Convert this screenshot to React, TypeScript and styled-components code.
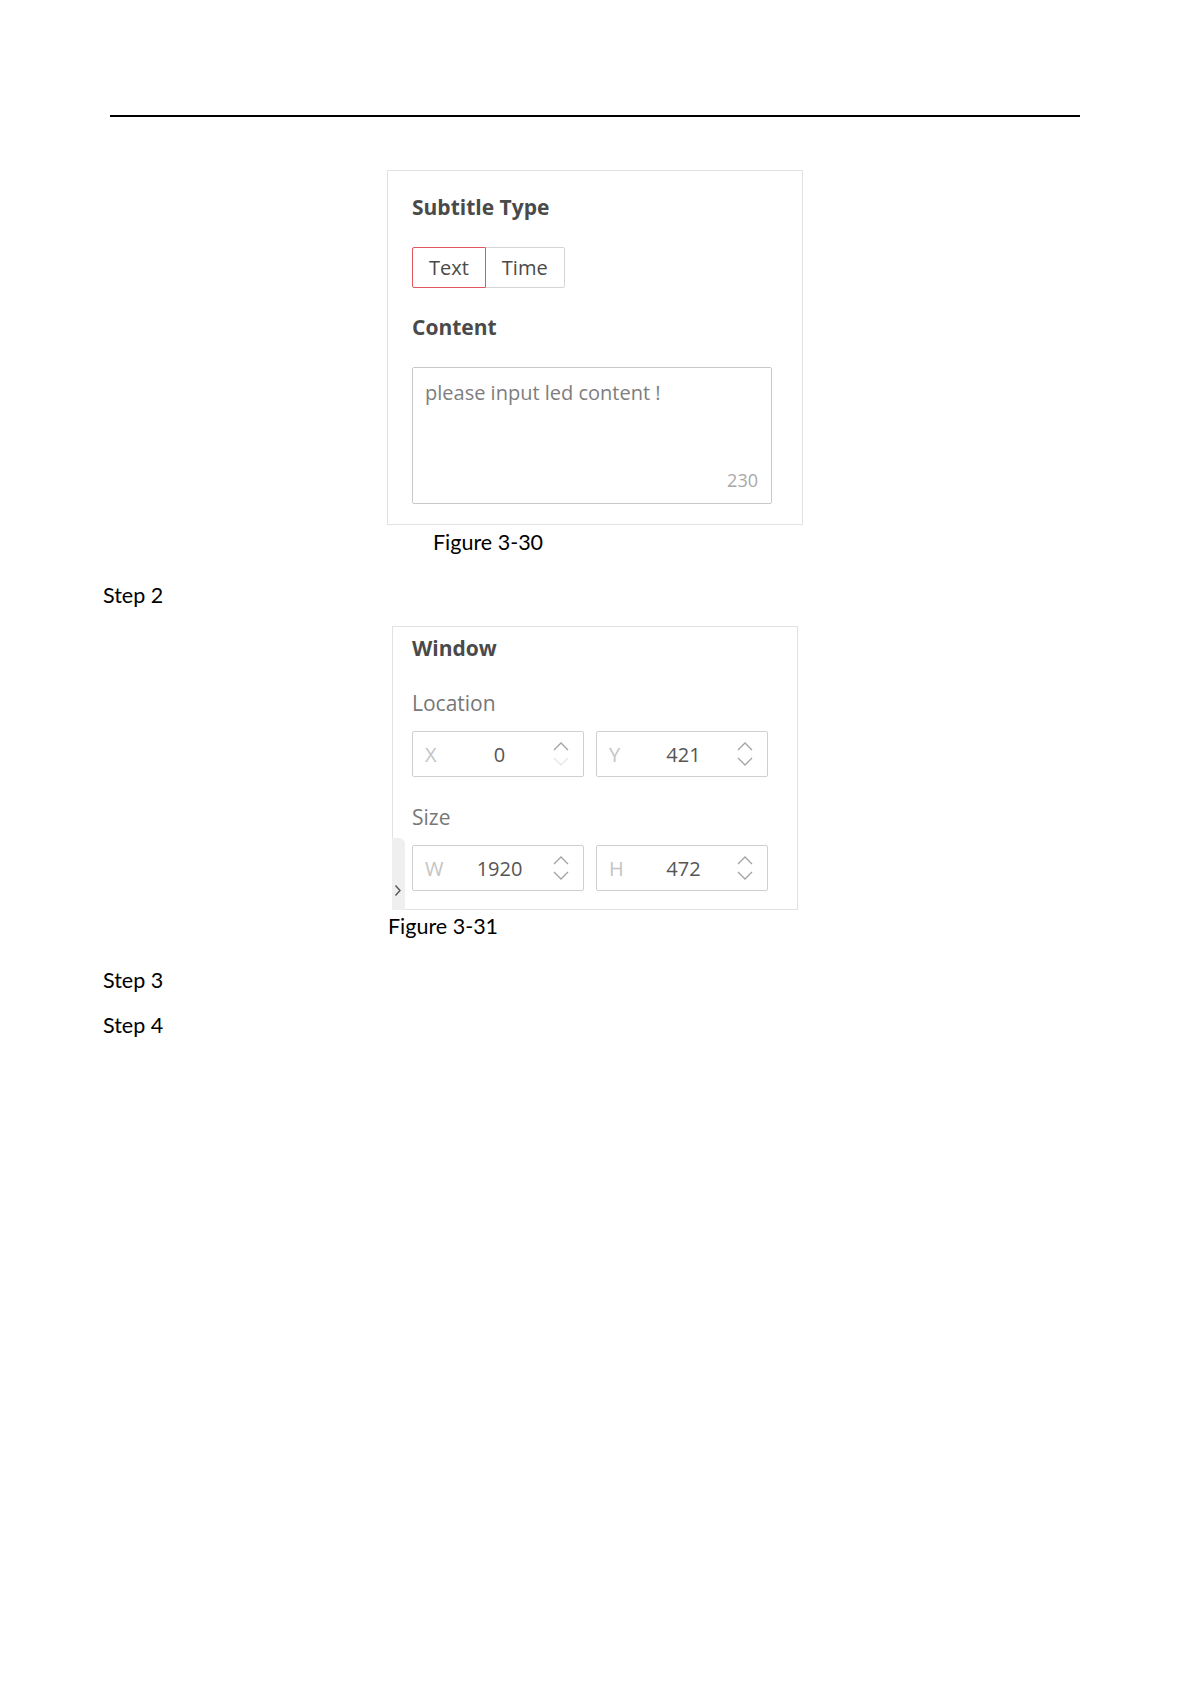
import React from "react";
import styled, { createGlobalStyle } from "styled-components";

const GlobalStyle = createGlobalStyle`
  html, body { margin: 0; padding: 0; background: #ffffff; }
  body { font-family: "Open Sans", "Noto Sans", sans-serif; }
  * { box-sizing: border-box; }
`;

const Page = styled.div`
  width: 1191px;
  min-height: 1684px;
  padding-top: 115px;
  display: flex;
  flex-direction: column;
  align-items: flex-start;
`;

const Rule = styled.div`
  margin-left: 110px;
  width: 970px;
  height: 2px;
  background: #000;
`;

const DocText = styled.div<{ $left: number; $top: number }>`
  margin-left: ${(p) => p.$left}px;
  margin-top: ${(p) => p.$top}px;
  font-family: Lato, "Liberation Sans", sans-serif;
  font-size: 21.5px;
  line-height: 26px;
  color: #000;
`;

const Panel = styled.div<{ $left: number; $top: number; $width: number }>`
  position: relative;
  margin-left: ${(p) => p.$left}px;
  margin-top: ${(p) => p.$top}px;
  width: ${(p) => p.$width}px;
  border: 1px solid #e2e2e2;
  background: #fff;
  display: flex;
  flex-direction: column;
  align-items: flex-start;
`;

const SubtitlePanel = styled(Panel)`
  padding: 22px 30px 20px 24px;
`;

const WindowPanel = styled(Panel)`
  padding: 7px 19px 18px 19px;
`;

const SectionTitle = styled.div<{ $top?: number }>`
  margin-top: ${(p) => p.$top ?? 0}px;
  font-weight: 700;
  font-size: 21px;
  line-height: 28px;
  color: #4a4a4a;
`;

const FieldLabel = styled.div<{ $top?: number }>`
  margin-top: ${(p) => p.$top ?? 0}px;
  font-weight: 400;
  font-size: 21px;
  line-height: 28px;
  color: #777;
`;

const Segmented = styled.div`
  display: flex;
  margin-top: 26px;
`;

const SegButton = styled.div<{ $active?: boolean; $first?: boolean }>`
  height: 41px;
  padding: 0 16px;
  display: flex;
  align-items: center;
  font-size: 20px;
  color: #4a4a4a;
  border: 1px solid ${(p) => (p.$active ? "#e0575d" : "#d4d4d4")};
  ${(p) => (p.$first ? "" : "border-left: none;")}
  border-radius: ${(p) => (p.$first ? "2px 0 0 2px" : "0 2px 2px 0")};
`;

const TextBox = styled.div`
  margin-top: 26px;
  width: 360px;
  height: 137px;
  border: 1px solid #c9c9c9;
  border-radius: 2px;
  padding: 11px 13px 11px 12px;
  display: flex;
  flex-direction: column;
  justify-content: space-between;
`;

const Placeholder = styled.div`
  font-size: 20px;
  line-height: 27px;
  color: #7e7e7e;
`;

const Counter = styled.div`
  align-self: flex-end;
  font-size: 18px;
  line-height: 24px;
  color: #a8a8a8;
`;

const InputRow = styled.div`
  display: flex;
  gap: 12px;
  margin-top: 14px;
`;

const NumInput = styled.div`
  width: 172px;
  height: 46px;
  border: 1px solid #cfcfcf;
  border-radius: 2px;
  display: flex;
  align-items: center;
  padding: 0 13px 0 12px;
`;

const Axis = styled.span`
  width: 22px;
  font-size: 20px;
  color: #c4c4c4;
`;

const Value = styled.span`
  flex: 1;
  text-align: center;
  font-size: 20px;
  color: #555;
`;

const CollapseTab = styled.div`
  position: absolute;
  left: -1px;
  top: 211px;
  bottom: -1px;
  width: 13px;
  background: #efefef;
  border-top-right-radius: 6px;
  display: flex;
  align-items: flex-end;
  justify-content: flex-start;
  padding: 0 0 13px 2px;
`;

const Spinner: React.FC<{ downDisabled?: boolean }> = ({ downDisabled }) => (
  <svg width="18" height="28" viewBox="0 0 18 28" fill="none">
    <path d="M2 10 L9 3 L16 10" stroke="#a3a3a3" strokeWidth="1.3" />
    <path d="M2 18 L9 25 L16 18" stroke={downDisabled ? "#e6e6e6" : "#a3a3a3"} strokeWidth="1.3" />
  </svg>
);

const Field: React.FC<{ axis: string; value: string; downDisabled?: boolean }> = ({ axis, value, downDisabled }) => (
  <NumInput>
    <Axis>{axis}</Axis>
    <Value>{value}</Value>
    <Spinner downDisabled={downDisabled} />
  </NumInput>
);

export default function App() {
  return (
    <>
      <GlobalStyle />
      <Page>
        <Rule />
        <SubtitlePanel $left={387} $top={53} $width={416}>
          <SectionTitle>Subtitle Type</SectionTitle>
          <Segmented>
            <SegButton $active $first>Text</SegButton>
            <SegButton>Time</SegButton>
          </Segmented>
          <SectionTitle $top={25}>Content</SectionTitle>
          <TextBox>
            <Placeholder>please input led content !</Placeholder>
            <Counter>230</Counter>
          </TextBox>
        </SubtitlePanel>
        <DocText $left={433} $top={4}>Figure 3-30</DocText>
        <DocText $left={103} $top={27}>Step 2</DocText>
        <WindowPanel $left={392} $top={18} $width={406}>
          <SectionTitle>Window</SectionTitle>
          <FieldLabel $top={27}>Location</FieldLabel>
          <InputRow>
            <Field axis="X" value="0" downDisabled />
            <Field axis="Y" value="421" />
          </InputRow>
          <FieldLabel $top={26}>Size</FieldLabel>
          <InputRow>
            <Field axis="W" value="1920" />
            <Field axis="H" value="472" />
          </InputRow>
          <CollapseTab>
            <svg width="8" height="13" viewBox="0 0 8 13" fill="none">
              <path d="M1.5 1.5 L6 6.5 L1.5 11.5" stroke="#555" strokeWidth="1.4" />
            </svg>
          </CollapseTab>
        </WindowPanel>
        <DocText $left={388} $top={3}>Figure 3-31</DocText>
        <DocText $left={103} $top={28}>Step 3</DocText>
        <DocText $left={103} $top={19}>Step 4</DocText>
      </Page>
    </>
  );
}
